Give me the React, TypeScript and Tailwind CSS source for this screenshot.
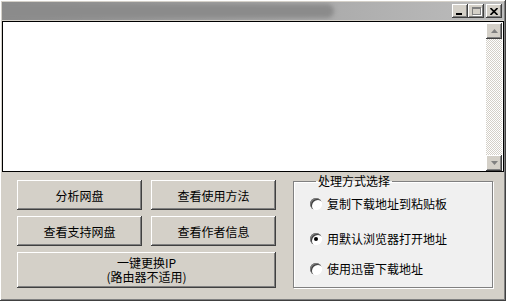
import React from 'react';

const raised =
  'shadow-[inset_-1px_-1px_#404040,inset_1px_1px_#ffffff,inset_-2px_-2px_#808080,inset_2px_2px_#d4d0c8]';

function Btn({ children, className = '' }: { children: React.ReactNode; className?: string }) {
  return (
    <button
      type="button"
      className={`bg-[#d4d0c8] text-black text-[12px] leading-[13px] flex flex-col items-center justify-center ${raised} ${className}`}
    >
      {children}
    </button>
  );
}

function TitleBtn({ children }: { children: React.ReactNode }) {
  return (
    <div className={`w-[16px] h-[14px] bg-[#d4d0c8] flex items-center justify-center ${raised}`}>
      {children}
    </div>
  );
}

function Radio({ label, checked, className = '' }: { label: string; checked?: boolean; className?: string }) {
  return (
    <div className={`flex items-center h-[16px] ${className}`}>
      <span className="w-[12px] h-[12px] rounded-full bg-white shadow-[inset_1px_1px_#808080,inset_2px_2px_#404040,inset_-1px_-1px_#ffffff] flex items-center justify-center">
        {checked && <span className="w-[4px] h-[4px] rounded-full bg-black" />}
      </span>
      <span className="ml-[5px] text-[12px] leading-[16px] text-black">{label}</span>
    </div>
  );
}

function ScrollArrow({ up }: { up?: boolean }) {
  return (
    <div className={`w-[16px] h-[16px] bg-[#d4d0c8] flex items-center justify-center ${raised}`}>
      <svg width="7" height="4" viewBox="0 0 7 4">
        {up ? (
          <path d="M0 4 L3.5 0 L7 4 Z" fill="#808080" />
        ) : (
          <path d="M0 0 L3.5 4 L7 0 Z" fill="#808080" />
        )}
      </svg>
    </div>
  );
}

export default function App() {
  return (
    <div
      className={`w-[506px] h-[301px] bg-[#d4d0c8] p-[2px] flex flex-col ${raised}`}
      style={{ fontFamily: '"SimSun", "Noto Sans CJK SC", sans-serif' }}
    >
      {/* 标题栏 */}
      <div className="relative h-[18px] bg-gradient-to-r from-[#8c8c8c] to-[#bdbdbd] flex items-center justify-end pr-[2px] overflow-hidden">
        <div className="absolute -left-[4px] top-[2px] w-[336px] h-[14px] rounded-full bg-[#8b8b8b] blur-[2px]" />
        <div className="relative flex items-center">
          <TitleBtn>
            <span className="block w-[6px] h-[2px] bg-black mt-[6px] -ml-[2px]" />
          </TitleBtn>
          <TitleBtn>
            <span className="block w-[9px] h-[8px] border border-[#808080] border-t-2 shadow-[1px_1px_#ffffff]" />
          </TitleBtn>
          <div className="w-[2px]" />
          <TitleBtn>
            <svg width="8" height="7" viewBox="0 0 8 7">
              <path d="M0.5 0 L7.5 7 M7.5 0 L0.5 7" stroke="#000" strokeWidth="1.6" />
            </svg>
          </TitleBtn>
        </div>
      </div>

      {/* 文本区域 */}
      <div className="mt-[1px] h-[151px] bg-white border border-black flex justify-end pr-[1px] pt-[1px]">
        <div className="w-[16px] flex flex-col bg-[repeating-conic-gradient(#d4d0c8_0_25%,#ffffff_0_50%)] bg-[length:2px_2px]">
          <ScrollArrow up />
          <div className="flex-1" />
          <ScrollArrow />
        </div>
      </div>

      {/* 底部 */}
      <div className="flex pl-[15px] pt-[8px]">
        <div className="w-[259px] flex flex-col gap-[6px]">
          <div className="grid grid-cols-2 gap-x-[9px] gap-y-[6px]">
            <Btn className="h-[30px]">分析网盘</Btn>
            <Btn className="h-[30px]">查看使用方法</Btn>
            <Btn className="h-[30px]">查看支持网盘</Btn>
            <Btn className="h-[30px]">查看作者信息</Btn>
          </div>
          <Btn className="h-[36px]">
            <span className="block whitespace-pre-line text-center leading-[14px]">
              {'一键更换IP\n(路由器不适用)'}
            </span>
          </Btn>
        </div>

        <fieldset className="ml-[17px] -mt-[6px] w-[200px] h-[114px] border border-[#808080] shadow-[1px_1px_#ffffff,inset_1px_1px_#ffffff] bg-[#f0f0f0] pl-[16px] pt-[8px]">
          <legend className="ml-[6px] px-[2px] text-[12px] leading-[14px] text-black">处理方式选择</legend>
          <div className="flex flex-col">
            <Radio label="复制下载地址到粘贴板" />
            <Radio label="用默认浏览器打开地址" checked className="mt-[19px]" />
            <Radio label="使用迅雷下载地址" className="mt-[14px]" />
          </div>
        </fieldset>
      </div>
    </div>
  );
}
